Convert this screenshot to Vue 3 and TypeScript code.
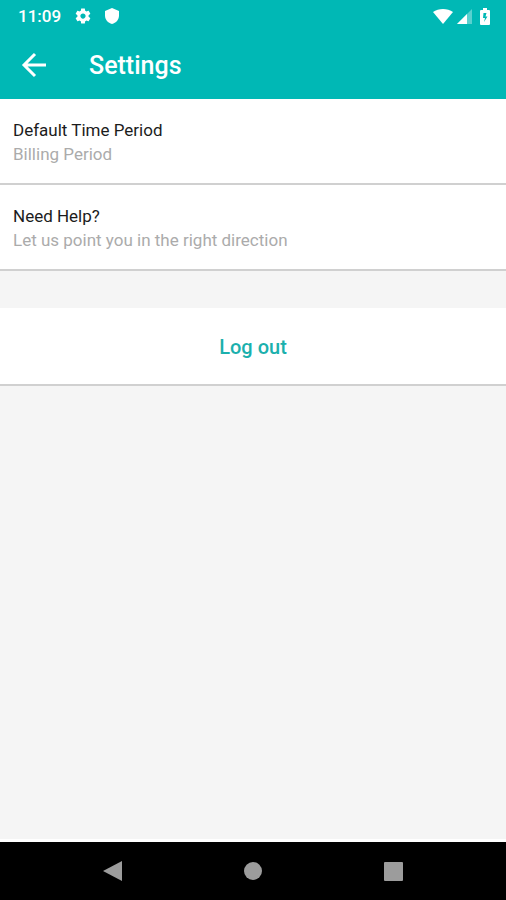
<script setup lang="ts">
import { ref } from 'vue'

interface Setting {
  title: string
  detail: string
}

const time = ref<string>('11:09')
const settings = ref<Setting[]>([
  { title: 'Default Time Period', detail: 'Billing Period' },
  { title: 'Need Help?', detail: 'Let us point you in the right direction' },
])
</script>

<template>
  <div class="screen">
    <header class="top">
      <div class="status">
        <div class="status-left">
          <span class="time">{{ time }}</span>
          <svg width="18" height="18" viewBox="0 0 24 24" aria-hidden="true">
            <path d="M19.43 12.98c.04-.32.07-.64.07-.98s-.03-.66-.07-.98l2.11-1.65c.19-.15.24-.42.12-.64l-2-3.46c-.12-.22-.39-.3-.61-.22l-2.49 1c-.52-.4-1.08-.73-1.69-.98l-.38-2.65C14.46 2.18 14.25 2 14 2h-4c-.25 0-.46.18-.49.42l-.38 2.65c-.61.25-1.17.59-1.69.98l-2.49-1c-.23-.09-.49 0-.61.22l-2 3.46c-.13.22-.07.49.12.64l2.11 1.65c-.04.32-.07.65-.07.98s.03.66.07.98l-2.11 1.65c-.19.15-.24.42-.12.64l2 3.46c.12.22.39.3.61.22l2.49-1c.52.4 1.08.73 1.69.98l.38 2.65c.03.24.24.42.49.42h4c.25 0 .46-.18.49-.42l.38-2.65c.61-.25 1.17-.59 1.69-.98l2.49 1c.23.09.49 0 .61-.22l2-3.46c.12-.22.07-.49-.12-.64l-2.11-1.65zM12 15.5c-1.93 0-3.5-1.57-3.5-3.5s1.57-3.5 3.5-3.5 3.5 1.57 3.5 3.5-1.57 3.5-3.5 3.5z" />
          </svg>
          <svg width="14" height="16" viewBox="0 0 14 16" aria-hidden="true">
            <path d="M7 0 14 3v4.500C14 11.500 11 15 7 16 3 15 0 11.500 0 7.500V3Z" />
          </svg>
        </div>
        <div class="status-right">
          <svg width="20" height="15" viewBox="0 0 20 15" aria-hidden="true">
            <path d="M0 3C5.500-1 14.500-1 20 3L10 15Z" />
          </svg>
          <svg class="signal" width="15" height="15" viewBox="0 0 15 15" aria-hidden="true">
            <path opacity=".35" d="M0 15 15 0v15Z" />
            <path d="M0 15 10 5v10Z" />
          </svg>
          <svg width="10" height="17" viewBox="0 0 10 17" aria-hidden="true">
            <path fill-rule="evenodd" d="M3 0h4v2h2q1 0 1 1v13q0 1-1 1H1q-1 0-1-1V3q0-1 1-1h2ZM6.500 5H3.500L3 10h2L4 14 7.500 8.500H5.500Z" />
          </svg>
        </div>
      </div>
      <div class="app-bar">
        <button class="back" type="button" aria-label="Back">
          <svg width="26" height="24" viewBox="0 0 26 24" aria-hidden="true">
            <path d="M24 11H3M13 0 2 11l11 11" />
          </svg>
        </button>
        <h1>Settings</h1>
      </div>
    </header>

    <main>
      <button v-for="item in settings" :key="item.title" class="row" type="button">
        <span class="title">{{ item.title }}</span>
        <span class="detail">{{ item.detail }}</span>
      </button>
      <button class="logout" type="button">Log out</button>
    </main>

    <nav class="nav" aria-label="System">
      <button type="button" aria-label="Back">
        <svg width="20" height="22" viewBox="0 0 20 22" aria-hidden="true">
          <path d="M0 11 19 1v20Z" />
        </svg>
      </button>
      <button type="button" aria-label="Home">
        <svg width="20" height="20" viewBox="0 0 20 20" aria-hidden="true">
          <circle cx="10" cy="10" r="9" />
        </svg>
      </button>
      <button type="button" aria-label="Recent apps">
        <svg width="20" height="20" viewBox="0 0 20 20" aria-hidden="true">
          <rect x="1" y="1" width="19" height="19" rx="1" />
        </svg>
      </button>
    </nav>
  </div>
</template>

<style>
body {
  margin: 0;
}
</style>

<style scoped>
.screen {
  min-height: 100vh;
  display: flex;
  flex-direction: column;
  background: #f5f5f5;
  font-family: Roboto, "Liberation Sans", sans-serif;
}

button {
  margin: 0;
  padding: 0;
  border: 0;
  background: none;
  font: inherit;
  cursor: pointer;
}

svg {
  display: block;
}

.top {
  background: #00b8b5;
  color: #fff;
}

.status {
  height: 32px;
  padding: 0 16px 0 18px;
  display: flex;
  align-items: center;
  justify-content: space-between;
}

.status svg {
  fill: #fff;
}

.status-left,
.status-right {
  display: flex;
  align-items: center;
}

.status-left {
  gap: 13px;
}

.status-right {
  gap: 4px;
}

.signal {
  margin-right: 4px;
}

.time {
  font-size: 17px;
  font-weight: 500;
}

.app-bar {
  height: 67px;
  padding: 0 22px;
  display: flex;
  align-items: center;
  gap: 41px;
}

.back svg {
  overflow: visible;
}

.back path {
  fill: none;
  stroke: #fff;
  stroke-width: 3;
}

h1 {
  margin: 0;
  font-size: 25px;
  font-weight: 500;
  line-height: 32px;
}

main {
  flex: 1;
  display: flex;
  flex-direction: column;
  border-bottom: 3px solid #fff;
}

.row {
  padding: 19px 13px 17px;
  display: flex;
  flex-direction: column;
  background: #fff;
  border-bottom: 2px solid #d0d0d0;
  font-size: 17px;
  line-height: 24px;
  text-align: left;
}

.title {
  color: #1c1c1c;
}

.detail {
  color: #ababab;
}

.logout {
  margin-top: 37px;
  padding: 27px 0 24px;
  background: #fff;
  border-bottom: 2px solid #d0d0d0;
  color: #1bb0ad;
  font-size: 20px;
  font-weight: 500;
  line-height: 25px;
}

.nav {
  height: 58px;
  padding: 0 103px;
  display: flex;
  align-items: center;
  justify-content: space-between;
  background: #000;
}

.nav svg {
  fill: #9c9c9c;
}
</style>
